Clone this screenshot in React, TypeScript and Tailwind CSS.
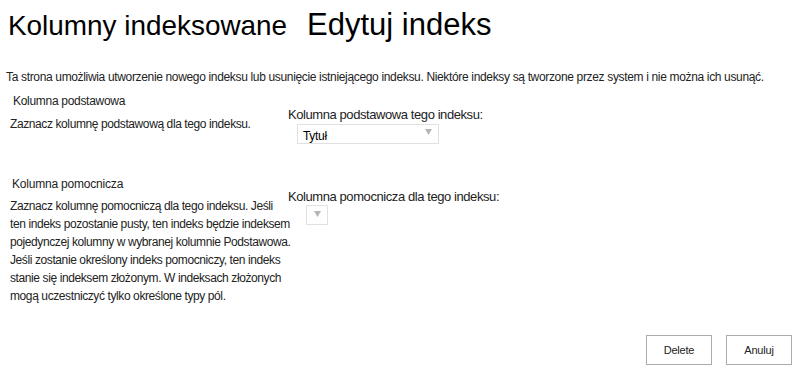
import React from "react";

function Caret() {
  return (
    <svg width="7" height="6" viewBox="0 0 7 6" className="shrink-0">
      <path d="M0 0 L7 0 L3.5 6 Z" fill="#b5b5b5" />
    </svg>
  );
}

export default function App() {
  return (
    <div
      className="w-[800px] h-[378px] bg-white text-[#222] overflow-hidden relative flex flex-col"
      style={{ fontFamily: '"Liberation Sans", Arial, sans-serif' }}
    >
      <div className="flex items-baseline pl-[8px] pt-[10px] h-[50px]">
        <span className="text-[27.9px] leading-[30px] text-black">Kolumny indeksowane</span>
        <span className="text-[31px] leading-[30px] text-black ml-[20px]">Edytuj indeks</span>
      </div>
      <div className="pl-[6px] mt-[19px] text-[12px] leading-[16px] tracking-[-0.34px] whitespace-nowrap">
        Ta strona umożliwia utworzenie nowego indeksu lub usunięcie istniejącego indeksu. Niektóre indeksy są tworzone przez system i nie można ich usunąć.
      </div>
      <div className="flex mt-[8px]">
        <div className="w-[282px] shrink-0 text-[12px] tracking-[-0.4px]">
          <div className="pl-[13px] leading-[16px] tracking-[-0.3px]">Kolumna podstawowa</div>
          <div className="pl-[10px] mt-[7px] leading-[16px]">Zaznacz kolumnę podstawową dla tego indeksu.</div>
        </div>
        <div className="pl-[6px] pt-[14px] text-[13px] tracking-[-0.42px]">
          <div className="leading-[16px]">Kolumna podstawowa tego indeksu:</div>
          <div className="ml-[9px] mt-[1px] w-[142px] h-[20px] border border-[#e1e1e1] flex items-start justify-between pl-[5px] pr-[6px] pt-[4px] text-[12px] tracking-[-0.3px]">
            <span className="leading-[14px] text-black">Tytuł</span>
            <span><Caret /></span>
          </div>
        </div>
      </div>
      <div className="flex mt-[32px]">
        <div className="w-[282px] shrink-0 text-[12px] tracking-[-0.4px]">
          <div className="pl-[12px] leading-[16px] tracking-[-0.2px]">Kolumna pomocnicza</div>
          <div className="pl-[10px] mt-[5px] leading-[18px] whitespace-nowrap">
            Zaznacz kolumnę pomocniczą dla tego indeksu. Jeśli
            <br />
            ten indeks pozostanie pusty, ten indeks będzie indeksem
            <br />
            pojedynczej kolumny w wybranej kolumnie Podstawowa.
            <br />
            Jeśli zostanie określony indeks pomocniczy, ten indeks
            <br />
            stanie się indeksem złożonym. W indeksach złożonych
            <br />
            mogą uczestniczyć tylko określone typy pól.
          </div>
        </div>
        <div className="pl-[6px] pt-[13px] text-[13px] tracking-[-0.42px]">
          <div className="leading-[16px]">Kolumna pomocnicza dla tego indeksu:</div>
          <div className="ml-[18px] w-[22px] h-[20px] border border-[#e1e1e1] flex justify-center pt-[5px]">
            <Caret />
          </div>
        </div>
      </div>
      <div className="flex-1" />
      <div className="flex justify-end gap-[14px] pr-[8px] pb-[13px]">
        <button className="w-[66px] h-[30px] border border-[#ababab] bg-white text-[11px] text-[#222] tracking-[-0.2px]">Delete</button>
        <button className="w-[66px] h-[30px] border border-[#ababab] bg-white text-[11px] text-[#222] tracking-[-0.2px]">Anuluj</button>
      </div>
    </div>
  );
}
